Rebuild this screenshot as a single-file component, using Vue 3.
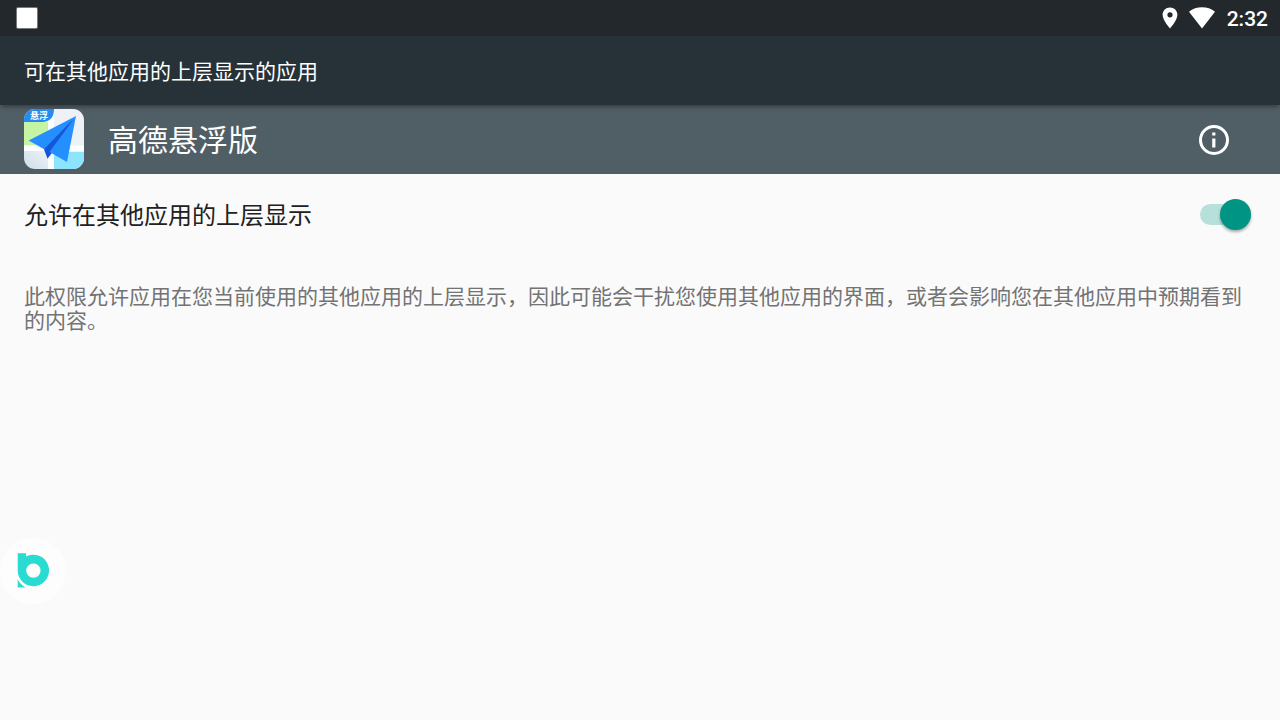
<script setup>
import { ref } from 'vue'

const allowed = ref(true)
</script>

<template>
  <div class="screen">
    <div class="status">
      <span class="notice"></span>
      <div class="tray">
        <svg class="pin" viewBox="0 0 16 22" aria-hidden="true">
          <path fill-rule="evenodd" d="M8 .5C3.800.5.6 3.700.6 7.800.6 13.200 8 21.500 8 21.500S15.400 13.200 15.400 7.800C15.400 3.700 12.200.5 8 .5ZM8 5.200a2.600 2.600 0 1 1 0 5.200 2.600 2.600 0 0 1 0-5.200Z" />
        </svg>
        <svg class="wifi" viewBox="0 0 26 22" aria-hidden="true">
          <path d="M0 4.700C7-1.200 19-1.200 26 4.700L13 21.400Z" />
        </svg>
        <time class="clock">2:32</time>
      </div>
    </div>

    <header class="toolbar">
      <h1>可在其他应用的上层显示的应用</h1>
    </header>

    <section class="app">
      <div class="logo">
        <svg viewBox="0 0 60 60" aria-hidden="true">
          <defs>
            <linearGradient id="ground" x1="0" y1="1" x2="1" y2="0">
              <stop offset="0" stop-color="#cfdde9" />
              <stop offset=".35" stop-color="#edf3f7" />
              <stop offset="1" stop-color="#eef1f5" />
            </linearGradient>
          </defs>
          <rect width="60" height="60" fill="url(#ground)" />
          <path d="M0 13H24V36H0Z" fill="#c5f5a4" />
          <path d="M30 43H60V60H30Z" fill="#8ce5fd" />
          <path d="M0 36.500H60V42H0ZM24 0H30V60H24Z" fill="#fcfdfe" />
          <path d="M0 0H30C30 8 26 13 18 13H0Z" fill="#268af0" />
          <path d="M52 7 4.700 31.500 21 40.800Z" fill="#2490ff" />
          <path d="M52 7 20 40.300 23.500 49.700 28 44Z" fill="#1557d8" />
          <path d="M52 7 25.500 43 43 53Z" fill="#2490ff" />
        </svg>
        <span class="tag">悬浮</span>
      </div>
      <h2>高德悬浮版</h2>
      <button class="info" type="button" aria-label="应用信息">
        <svg viewBox="0 0 30 30" aria-hidden="true">
          <circle cx="15" cy="15" r="13.500" fill="none" stroke="#fff" stroke-width="3" />
          <path d="M13.200 7.500h3.200v3h-3.200ZM13.200 13.500h3.200v9h-3.200Z" fill="#fff" />
        </svg>
      </button>
    </section>

    <main>
      <label class="setting">
        <span>允许在其他应用的上层显示</span>
        <input v-model="allowed" type="checkbox" role="switch" class="switch" />
      </label>
      <p>此权限允许应用在您当前使用的其他应用的上层显示，因此可能会干扰您使用其他应用的界面，或者会影响您在其他应用中预期看到的内容。</p>
    </main>

    <button class="bubble" type="button" aria-label="悬浮球">
      <svg viewBox="0 0 66 66" aria-hidden="true">
        <path fill="#2adbd2" fill-rule="evenodd" d="M17.700 15.300H26V18.600A15.700 15.700 0 1 1 17.700 32.500ZM33.400 25.400a7.200 7.200 0 1 0 0 14.400 7.200 7.200 0 0 0 0-14.400Z" />
        <path fill="#2adbd2" d="M17.700 41.500Q20.500 46.800 25.700 49.500H17.700Z" />
      </svg>
    </button>
  </div>
</template>

<style>
body {
  margin: 0;
  background: #fafafa;
}
</style>

<style scoped>
.screen {
  position: relative;
  min-height: 100vh;
  background: #fafafa;
  font-family: Roboto, "Noto Sans CJK SC", sans-serif;
  color: #212121;
}

h1,
h2,
p {
  margin: 0;
  font-weight: 400;
}

svg {
  display: block;
}

button {
  padding: 0;
  border: 0;
  background: none;
  cursor: pointer;
}

.status {
  display: flex;
  align-items: center;
  justify-content: space-between;
  height: 36px;
  padding: 0 12px 0 17px;
  background: #22282b;
  color: #fff;
}

.notice {
  width: 20px;
  height: 20px;
  border-radius: 1px;
  background: #fff;
  box-shadow: 0 0 0 1px #ffffff60;
}

.tray {
  display: flex;
  align-items: center;
  fill: #fff;
}

.pin {
  width: 16px;
  height: 22px;
}

.wifi {
  width: 26px;
  height: 22px;
  margin: 0 12px 0 11px;
}

.clock {
  padding-top: 2px;
  font-size: 21px;
  font-weight: 500;
  line-height: 34px;
}

.toolbar {
  position: relative;
  display: flex;
  align-items: center;
  box-sizing: border-box;
  height: 69px;
  padding: 2px 24px 0;
  background: #263238;
  color: #fff;
  box-shadow: 0 3px 4px -1px #00000055;
}

.toolbar h1 {
  font-size: 21px;
  line-height: 30px;
}

.app {
  display: flex;
  align-items: flex-start;
  box-sizing: border-box;
  height: 69px;
  padding: 4px 51px 0 24px;
  background: #505e65;
  color: #fff;
}

.logo {
  position: relative;
  width: 60px;
  height: 60px;
  border-radius: 11px;
  overflow: hidden;
}

.tag {
  position: absolute;
  top: 2px;
  left: 6px;
  font-size: 9px;
  font-weight: 700;
  line-height: 10px;
}

.app h2 {
  flex: 1;
  margin-left: 24px;
  font-size: 30px;
  line-height: 64px;
}

.info {
  padding-top: 16px;
}

.info svg {
  width: 30px;
  height: 30px;
}

.setting {
  display: flex;
  align-items: center;
  justify-content: space-between;
  height: 81px;
  padding: 0 29px 0 24px;
  font-size: 24px;
  cursor: pointer;
}

.setting span {
  padding-bottom: 2px;
}

.switch {
  appearance: none;
  position: relative;
  width: 51px;
  height: 31px;
  margin: 0;
  cursor: pointer;
}

.switch::before {
  content: "";
  position: absolute;
  inset: 5px 0;
  border-radius: 11px;
  background: #bdbdbd;
}

.switch::after {
  content: "";
  position: absolute;
  top: 0;
  left: 0;
  width: 31px;
  height: 31px;
  border-radius: 50%;
  background: #f1f1f1;
  box-shadow: 0 2px 3px #00000055;
}

.switch:checked::before {
  background: #b7e0dc;
}

.switch:checked::after {
  left: 20px;
  background: #009485;
}

p {
  padding: 30px 24px;
  font-size: 21px;
  line-height: 24px;
  color: #737373;
}

.bubble {
  position: fixed;
  left: 0;
  top: 538px;
  width: 66px;
  height: 66px;
  border-radius: 50%;
  background: #fdfdfd;
}
</style>
